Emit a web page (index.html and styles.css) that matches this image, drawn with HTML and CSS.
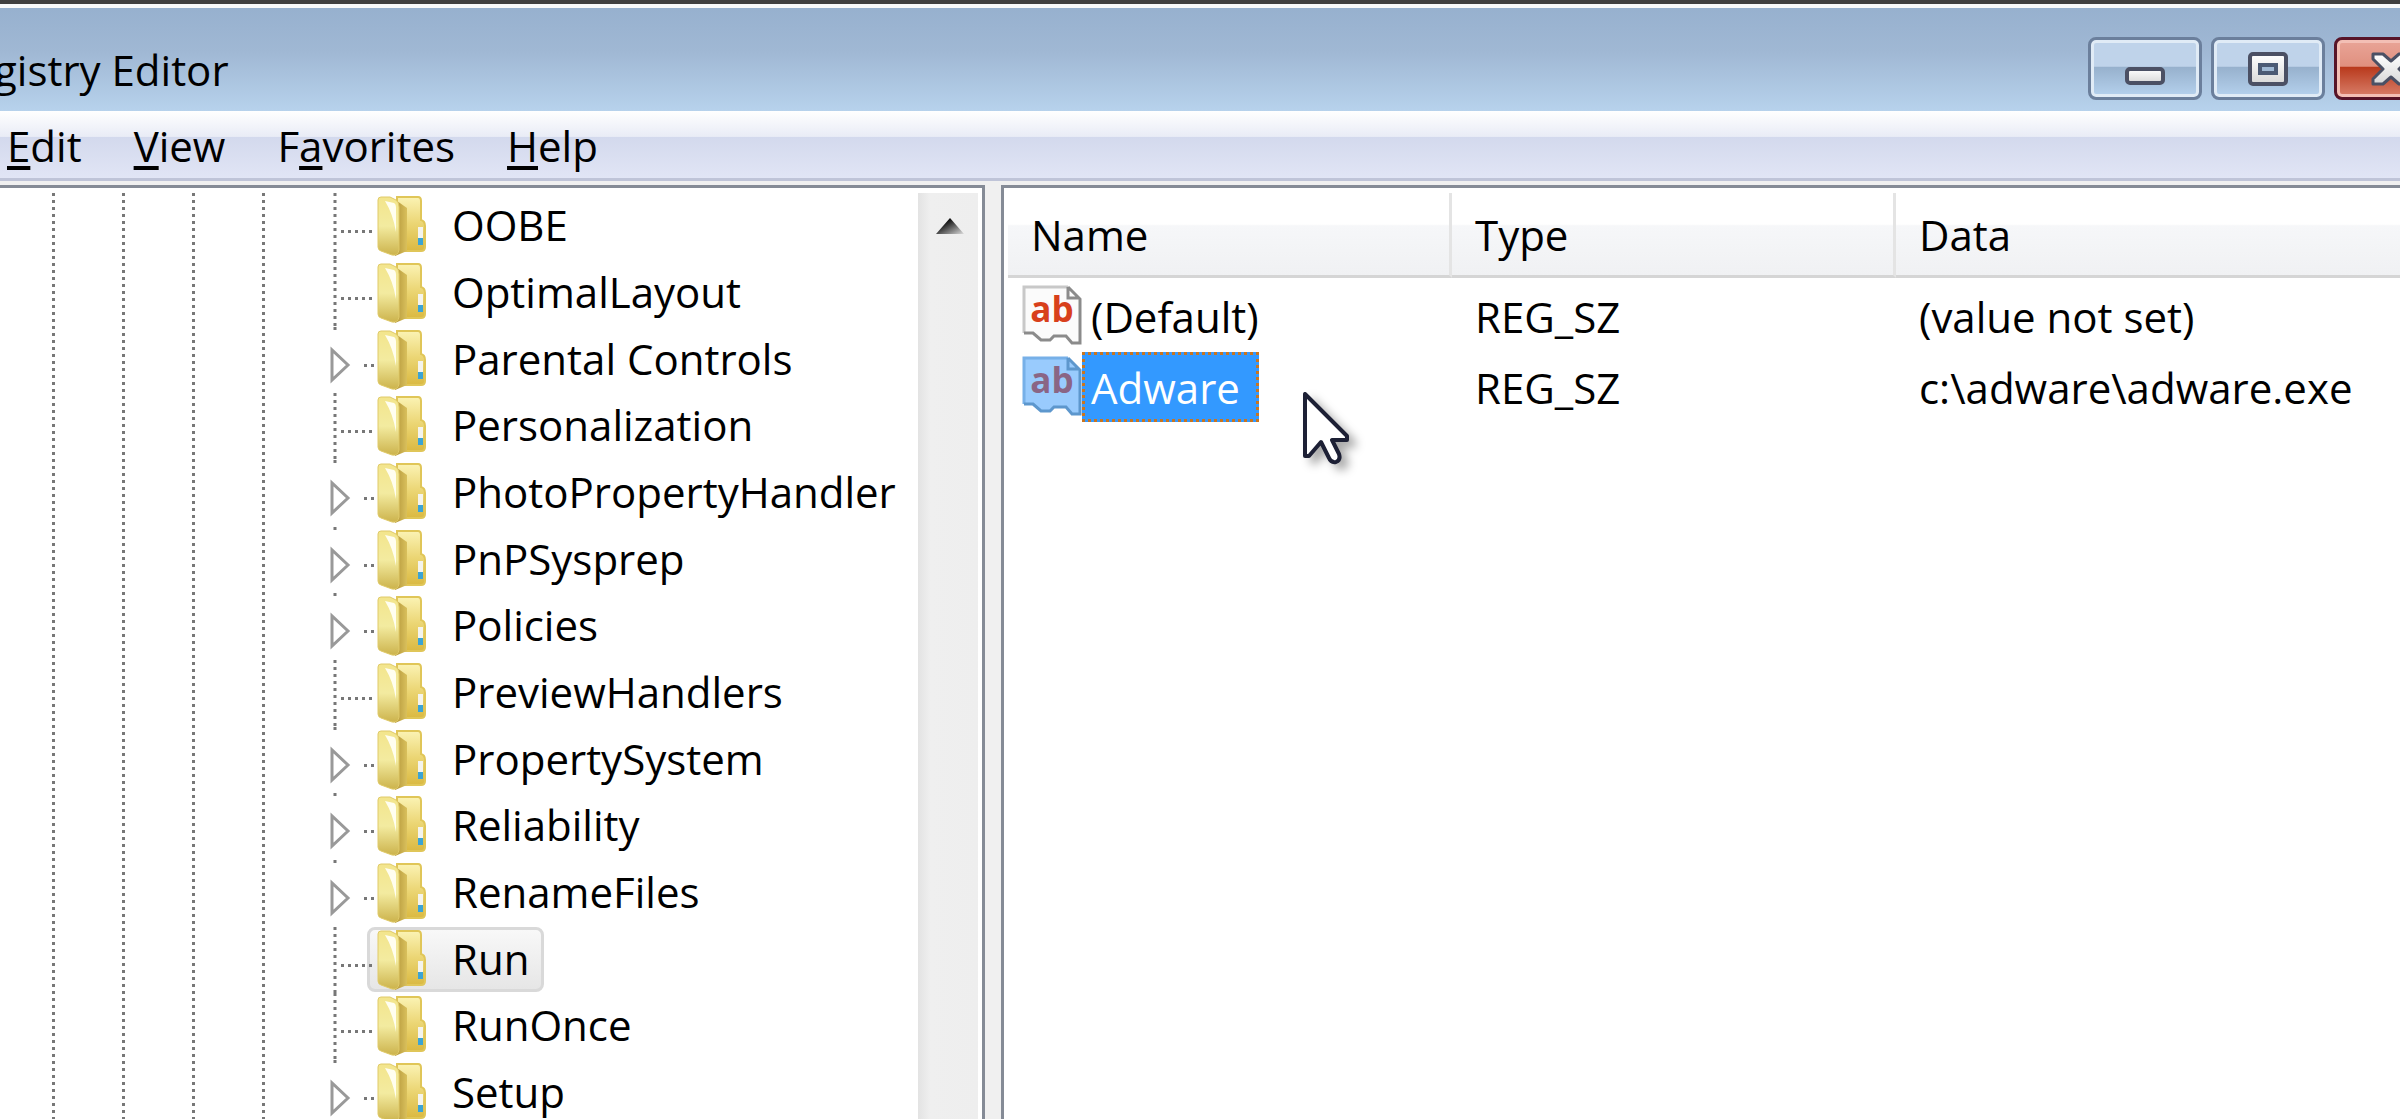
FILE: index.html
```html
<!DOCTYPE html>
<html lang="en">
<head>
<meta charset="utf-8">
<title>Registry Editor</title>
<link rel="stylesheet" href="styles.css">
</head>
<body>
<svg class="defs" width="0" height="0" aria-hidden="true">
  <defs>
    <linearGradient id="fFront" x1="0" y1="0" x2="0" y2="1"><stop offset="0" stop-color="#f3e58c"/><stop offset=".5" stop-color="#f3eba0"/><stop offset="1" stop-color="#ccb34c"/></linearGradient>
    <linearGradient id="fBack" x1="0" y1="0" x2="0" y2="1"><stop offset="0" stop-color="#fbf3b4"/><stop offset=".5" stop-color="#ebd573"/><stop offset="1" stop-color="#dab942"/></linearGradient>
    <linearGradient id="fSpine" x1="0" y1="0" x2="1" y2="0"><stop offset="0" stop-color="#b3963a"/><stop offset="1" stop-color="#d9c05c"/></linearGradient>
    <linearGradient id="glyph" x1="0" y1="0" x2="0" y2="1"><stop offset="0" stop-color="#fff"/><stop offset="1" stop-color="#d8d8d8"/></linearGradient>
    <linearGradient id="tri" x1="0" y1="0" x2="1" y2="1"><stop offset=".3" stop-color="#111"/><stop offset="1" stop-color="#ddd"/></linearGradient>
    <symbol id="folder" viewBox="0 0 50 61">
      <path d="M20 1H41Q44 1 44 5V24Q48 25 48 30V51Q48 55 44 55H20Z" fill="url(#fBack)" stroke="#e0c658" stroke-width="2"/>
      <path d="M20 5L30 12V55L18 60Z" fill="url(#fSpine)"/>
      <path d="M4 1H13L19 4Q22 6 22 11V54Q21 60 15 59L4 55Q1 54 1 51V4Q1 1 4 1Z" fill="url(#fFront)" stroke="#e0ca68" stroke-width="1"/>
      <path d="M8 5L17 7Q19 8 19 12V36Q16 18 8 5Z" fill="#fffef0"/>
      <path d="M41 31H46V42H41Z" fill="#f4f4ee"/>
      <path d="M41 42H46V49H41Z" fill="#3ba4d4"/>
    </symbol>
    <symbol id="regsz" viewBox="0 0 60 60">
      <path class="paper" d="M2 2H46L58 14V57H50L44 51H32L28 55H19L11 48H2Z" fill="#fbfbfb"/>
      <path d="M2 48V2H46" fill="none" stroke="#c8c8c8" stroke-width="3"/>
      <path d="M46 2V13H57M46 2L58 14V58H50L44 51H32L28 55H19L11 48H2" fill="none" stroke="#8b8b8b" stroke-width="3"/>
    </symbol>
    <symbol id="regsz-picked" viewBox="0 0 60 60">
      <path d="M2 2H46L58 14V57H50L44 51H32L28 55H19L11 48H2Z" fill="#99cbfd"/>
      <path d="M2 48V2H46" fill="none" stroke="#77b0e8" stroke-width="3"/>
      <path d="M46 2V13H57M46 2L58 14V58H50L44 51H32L28 55H19L11 48H2" fill="none" stroke="#5d97cd" stroke-width="3"/>
    </symbol>
  </defs>
</svg>
<div class="window">
  <header class="titlebar">
    <h1 class="title">gistry Editor</h1>
    <div class="controls">
      <button class="ctl" type="button" aria-label="Minimize"><svg width="40" height="18" viewBox="0 0 40 18"><rect x="2" y="2" width="36" height="14" rx="3" fill="url(#glyph)" stroke="#4b5064" stroke-width="4"/></svg></button>
      <button class="ctl" type="button" aria-label="Maximize"><svg width="40" height="34" viewBox="0 0 40 34"><rect x="2" y="2" width="36" height="30" rx="3" fill="url(#glyph)" stroke="#4b5064" stroke-width="4"/><rect x="12" y="13" width="16" height="8" fill="#9fb8d3" stroke="#4b5a74" stroke-width="4"/></svg></button>
      <button class="ctl close" type="button" aria-label="Close"><svg width="42" height="34" viewBox="0 0 42 34"><path d="M3 2H13L21 9L29 2H39V7L29 17L39 27V32H29L21 25L13 32H3V27L13 17L3 7Z" fill="url(#glyph)" stroke="#4b5064" stroke-width="3" stroke-linejoin="round"/></svg></button>
    </div>
  </header>
  <nav class="menubar">
    <button type="button"><u>E</u>dit</button>
    <button type="button"><u>V</u>iew</button>
    <button type="button">F<u>a</u>vorites</button>
    <button type="button"><u>H</u>elp</button>
  </nav>
  <main class="panes">
    <section class="tree-pane">
      <ul class="tree">
        <li class="leaf"><i class="twig"></i><span class="key"><svg class="folder"><use href="#folder"/></svg>OOBE</span></li>
        <li class="leaf"><i class="twig"></i><span class="key"><svg class="folder"><use href="#folder"/></svg>OptimalLayout</span></li>
        <li><i class="twig"></i><span class="key"><svg class="folder"><use href="#folder"/></svg>Parental Controls</span></li>
        <li class="leaf"><i class="twig"></i><span class="key"><svg class="folder"><use href="#folder"/></svg>Personalization</span></li>
        <li><i class="twig"></i><span class="key"><svg class="folder"><use href="#folder"/></svg>PhotoPropertyHandler</span></li>
        <li><i class="twig"></i><span class="key"><svg class="folder"><use href="#folder"/></svg>PnPSysprep</span></li>
        <li><i class="twig"></i><span class="key"><svg class="folder"><use href="#folder"/></svg>Policies</span></li>
        <li class="leaf"><i class="twig"></i><span class="key"><svg class="folder"><use href="#folder"/></svg>PreviewHandlers</span></li>
        <li><i class="twig"></i><span class="key"><svg class="folder"><use href="#folder"/></svg>PropertySystem</span></li>
        <li><i class="twig"></i><span class="key"><svg class="folder"><use href="#folder"/></svg>Reliability</span></li>
        <li><i class="twig"></i><span class="key"><svg class="folder"><use href="#folder"/></svg>RenameFiles</span></li>
        <li class="leaf"><i class="twig"></i><span class="key selected"><svg class="folder"><use href="#folder"/></svg>Run</span></li>
        <li class="leaf"><i class="twig"></i><span class="key"><svg class="folder"><use href="#folder"/></svg>RunOnce</span></li>
        <li><i class="twig"></i><span class="key"><svg class="folder"><use href="#folder"/></svg>Setup</span></li>
      </ul>
      <div class="scrollbar"><svg width="28" height="16" viewBox="0 0 28 16"><path d="M14 0L28 16H0Z" fill="url(#tri)"/></svg></div>
    </section>
    <section class="list-pane">
      <table class="values">
        <thead><tr><th class="col">Name</th><th class="col">Type</th><th>Data</th></tr></thead>
        <tbody>
          <tr><td><span class="value"><span class="icon"><svg><use href="#regsz"/></svg><b>ab</b></span><span class="name">(Default)</span></span></td><td>REG_SZ</td><td>(value not set)</td></tr>
          <tr class="picked"><td><span class="value"><span class="icon"><svg><use href="#regsz-picked"/></svg><b>ab</b></span><span class="name">Adware</span></span></td><td>REG_SZ</td><td>c:\adware\adware.exe</td></tr>
        </tbody>
      </table>
    </section>
  </main>
  <svg class="pointer" width="56" height="80" viewBox="0 0 56 80"><path d="M2 2V64H6L18 50L26 66Q28 71 33 70Q38 68 36 62L29 48H44V44Z" fill="#fff" stroke="#1d2035" stroke-width="4" stroke-linejoin="round"/></svg>
</div>
</body>
</html>
```
FILE: styles.css
```css
* { box-sizing: border-box; }
body { margin: 0; background: #fff; color: #000; font: 42px/66px "Open Sans", "Noto Sans", sans-serif; }
.defs { position: absolute; }
button { border: 0; padding: 0; background: none; color: inherit; font: inherit; }
.window { position: relative; display: flex; flex-direction: column; height: 100vh; overflow: hidden; background: #f0f0f0; }

.titlebar { flex: none; display: flex; justify-content: space-between; height: 111px; padding-top: 33px; overflow: hidden;
  border-top: 4px solid #403f3f; box-shadow: inset 0 4px #f8f9fa; background: linear-gradient(#96b0ce, #a0b8d4 45%, #b7d2ec); }
.title { margin: 0 0 0 -6px; font-size: 42px; font-weight: 400; line-height: 66px; }
.controls { display: flex; gap: 9px; margin-right: -48px; }
.ctl { display: flex; align-items: center; justify-content: center; width: 114px; height: 63px; border: 3px solid #6b7f9c; border-radius: 8px;
  box-shadow: inset 0 0 0 3px #e0ebf6; background: linear-gradient(#bfd3ea 46%, #97b1cd 48%, #b6d2ee); }
.ctl:first-child { padding-top: 14px; }
.close { border-color: #571428; box-shadow: inset 0 0 0 3px #f3bfb5; background: linear-gradient(#e9a598, #e0907f 46%, #b93a1d 48%, #d9806b); }

.menubar { flex: none; display: flex; gap: 52px; height: 70px; padding: 2px 0 0 7px; border-bottom: 3px solid #bfc4d8;
  background: linear-gradient(#fff, #e9ecf6 38%, #d3d9ed 39%, #e1e5f5); }
.menubar u { text-decoration-thickness: 4px; text-underline-offset: 4px; text-decoration-skip-ink: none; }

.panes { flex: 1; display: grid; grid-template-columns: 985px 1fr; gap: 16px; min-height: 0; padding-top: 4px; }
.tree-pane, .list-pane { border-top: 3px solid #858b96; background: #fff; overflow: hidden; }
.tree-pane { display: flex; justify-content: space-between; padding: 5px 4px 0 0; border-right: 3px solid #858b96; }
.tree { flex: 1; margin: 0; padding: 0 0 0 52px; list-style: none;
  background: repeating-linear-gradient(transparent 0 3px, #fff 3px 7px), repeating-linear-gradient(90deg, #777 0 3px, transparent 3px 70px) 52px 0 / 214px 100% no-repeat; }
.tree li { display: flex; height: 67px; padding-left: 278px; }
.tree li:nth-child(3n) { height: 66px; }
.twig { position: relative; flex: none; width: 45px; background: url("data:image/svg+xml,%3Csvg xmlns='http://www.w3.org/2000/svg' width='45' height='66'%3E%3Cpath d='M5 0V3M34 38.5H45' stroke='%23777' stroke-width='3' stroke-dasharray='3 4'/%3E%3Cpath d='M2 23V53L18 38Z' fill='%23fff' stroke='%23999' stroke-width='3'/%3E%3C/svg%3E") no-repeat; }
.leaf .twig { background-image: url("data:image/svg+xml,%3Csvg xmlns='http://www.w3.org/2000/svg' width='45' height='67'%3E%3Cpath d='M5 0V67M11 38.5H45' stroke='%23777' stroke-width='3' stroke-dasharray='3 4'/%3E%3C/svg%3E"); }
.key { display: flex; gap: 25px; height: 65px; margin-left: -8px; padding: 0 12px 0 7px; line-height: 58px; border: 3px solid transparent; border-radius: 8px; }
.selected { border-color: #d9d9d9; background: linear-gradient(#f8f8f8, #e6e6e6); }
.folder { width: 50px; height: 61px; }
.scrollbar { width: 60px; padding: 25px 0 0 18px; background: linear-gradient(90deg, #e3e3e3, #efefef 12px, #eee); line-height: 0; }

.list-pane { border-left: 3px solid #858b96; padding: 5px 0 0 4px; }
.values { width: 100%; border-collapse: separate; border-spacing: 0; table-layout: fixed; }
.values th { height: 85px; padding: 2px 23px 0; font-weight: 400; text-align: left; border-bottom: 3px solid #d5d5d5; background: linear-gradient(#fff 38%, #f6f7f9 40%, #f0f1f3); }
.values th.col { width: 444px; border-right: 3px solid #e4e4e4; }
.values td { height: 71px; padding: 7px 23px 0; line-height: 64px; white-space: nowrap; vertical-align: top; }
.value { display: flex; height: 64px; margin-left: -9px; }
.icon { display: grid; flex: none; width: 60px; height: 60px; }
.icon svg, .icon b { grid-area: 1 / 1; width: 60px; height: 60px; }
.icon b { color: #d8401b; font-size: 35px; line-height: 48px; text-align: center; }
.name { padding: 0 9px; }
.picked .name { height: 70px; margin: -4px 0 0; padding: 1px 16px 0 6px; color: #fff; background: #39f; border: 3px dotted #c9751f; }
.picked .icon b { color: #8a6585; }
.pointer { position: absolute; left: 1303px; top: 392px; overflow: visible; filter: drop-shadow(7px 6px 5px #0005); }
```
